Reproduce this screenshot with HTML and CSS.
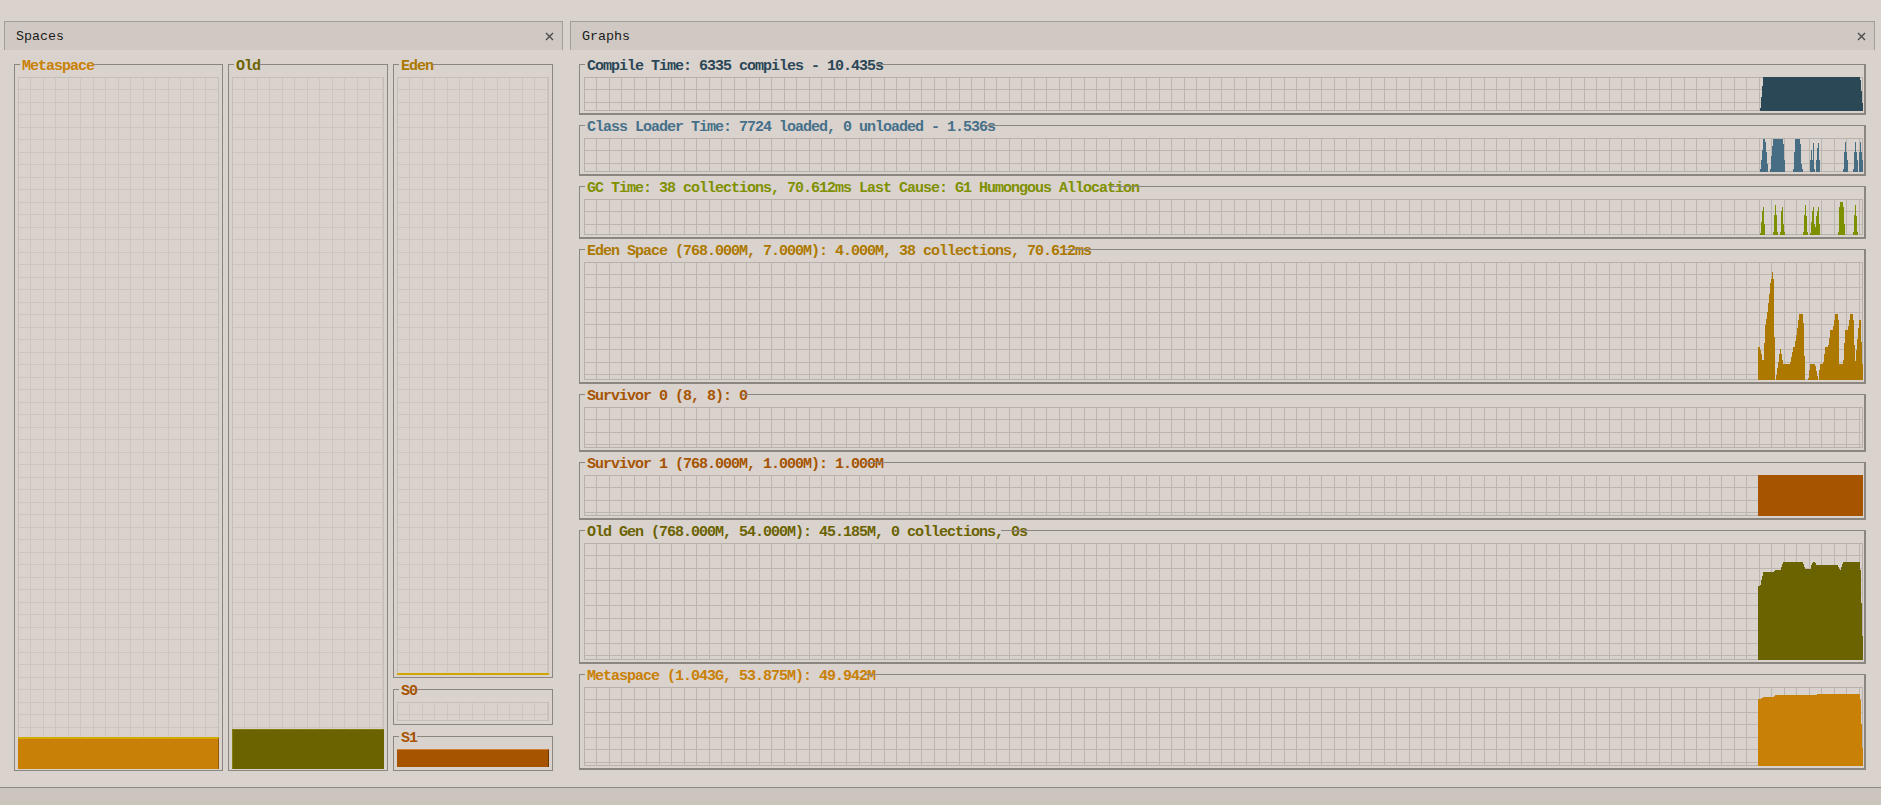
FILE: index.html
```html
<!DOCTYPE html>
<html>
<head>
<meta charset="utf-8">
<title>Visual GC</title>
<link rel="stylesheet" href="styles.css">
</head>
<body>
<div class="app">
  <div class="main">
    <section class="panel spaces">
      <div class="tab"><span class="tab-title">Spaces</span><svg class="close" viewBox="0 0 9 9"><path d="M1 1L8 8M8 1L1 8"/></svg></div>
      <div class="spaces-body">
        <div class="col col-meta">
          <div class="box grow">
            <div class="ttl"><span class="tt c-meta">Metaspace</span></div>
            <div class="frame"><div class="grid sgrid"><div class="fill f-meta"></div></div></div>
          </div>
        </div>
        <div class="col col-old">
          <div class="box grow">
            <div class="ttl"><span class="tt c-old">Old</span></div>
            <div class="frame"><div class="grid sgrid"><div class="fill f-old"></div></div></div>
          </div>
        </div>
        <div class="col col-right">
          <div class="box grow">
            <div class="ttl"><span class="tt c-eden">Eden</span></div>
            <div class="frame f-eden-frame"><div class="grid sgrid"><div class="fill f-eden"></div></div></div>
          </div>
          <div class="box">
            <div class="ttl"><span class="tt c-surv">S0</span></div>
            <div class="frame f-surv-frame"><div class="grid sgrid h-s0"></div></div>
          </div>
          <div class="box">
            <div class="ttl"><span class="tt c-surv">S1</span></div>
            <div class="frame f-surv-frame"><div class="grid sgrid h-s1"><div class="fill f-s1"></div></div></div>
          </div>
        </div>
      </div>
    </section>

    <section class="panel graphs">
      <div class="tab"><span class="tab-title">Graphs</span><svg class="close" viewBox="0 0 9 9"><path d="M1 1L8 8M8 1L1 8"/></svg></div>
      <div class="graphs-body">
        <div class="box gbox">
          <div class="ttl ov-compile"><span class="tt c-compile">Compile Time: 6335 compiles - 10.435s</span></div>
          <div class="frame"><div class="grid ggrid h-compile">
            <svg class="plot" width="105" height="34" viewBox="174 81 315 102" preserveAspectRatio="none" shape-rendering="crispEdges"><path class="p-compile" d="M180,183V174H183V141H186V108H189V81H480V90H483V122H486V158H489V183Z"/></svg>
          </div></div>
        </div>
        <div class="box gbox">
          <div class="ttl ov-cl"><span class="tt c-cl">Class Loader Time: 7724 loaded, 0 unloaded - 1.536s</span></div>
          <div class="frame"><div class="grid ggrid h-cl">
            <svg class="plot" width="105" height="34" viewBox="174 263 315 102" preserveAspectRatio="none" shape-rendering="crispEdges"><path class="p-cl" d="M180,365V357H183V330H186V300H189V267H195V276H198V306H201V342H204V365Z M210,365V357H213V318H216V288H219V267H249V282H252V330H255V365Z M279,365V357H282V306H285V267H300V282H303V342H306V357H309V365Z M330,365V330H333V300H336V330H339V279H342V357H345V365Z M348,365V330H351V294H354V279H357V330H360V365Z M429,365V357H432V306H435V276H438V306H441V330H444V365Z M459,365V357H462V306H465V276H468V306H471V330H474V365Z M477,365V306H480V276H483V306H486V330H489V365Z"/></svg>
          </div></div>
        </div>
        <div class="box gbox">
          <div class="ttl ov-gc"><span class="tt c-gc">GC Time: 38 collections, 70.612ms Last Cause: G1 Humongous Allocation</span></div>
          <div class="frame"><div class="grid ggrid h-gc">
            <svg class="plot" width="105" height="36" viewBox="174 442 315 108" preserveAspectRatio="none" shape-rendering="crispEdges"><path class="p-gc" d="M180,550V543H183V510H186V477H189V465H192V516H195V550Z M219,550V540H222V489H225V459H228V489H231V540H234V550Z M240,550V540H243V477H246V465H249V516H252V540H255V550Z M309,550V540H312V489H315V459H318V492H321V540H324V550Z M330,550V543H333V510H336V477H339V465H342V516H345V525H348V492H351V477H354V465H357V516H360V550Z M414,550V540H417V465H420V450H429V465H432V516H435V550Z M459,550V540H462V489H465V459H468V492H471V540H474V550Z"/></svg>
          </div></div>
        </div>
        <div class="box gbox">
          <div class="ttl ov-eden"><span class="tt c-eden">Eden Space (768.000M, 7.000M): 4.000M, 38 collections, 70.612ms</span></div>
          <div class="frame"><div class="grid ggrid h-eden">
            <svg class="plot" width="105" height="118" viewBox="174 65 315 354" preserveAspectRatio="none" shape-rendering="crispEdges"><path class="p-eden" d="M174,419V321H180V328H183V342H186V360H192V309H195V253H198V235H201V216H204V189H207V162H210V129H213V117H216V96H218V117H221V291H225V419Z M228,419V403H231V384H234V366H237V342H240V327H242V342H245V360H249V372H270V366H273V351H276V336H279V321H285V303H288V285H291V264H294V240H297V222H309V249H312V348H315V419Z M324,419V413H327V390H330V372H345V378H348V393H351V408H354V419Z M357,419V390H360V372H369V366H372V342H375V321H384V315H387V294H390V270H399V258H402V240H405V222H414V240H417V372H429V360H432V309H435V270H444V258H447V240H450V222H459V240H462V315H465V363H468V330H471V297H474V264H477V240H483V306H486V372H489V419Z"/></svg>
          </div></div>
        </div>
        <div class="box gbox">
          <div class="ttl ov-s0"><span class="tt c-surv">Survivor 0 (8, 8): 0</span></div>
          <div class="frame"><div class="grid ggrid h-surv"></div></div>
        </div>
        <div class="box gbox">
          <div class="ttl ov-s1"><span class="tt c-surv">Survivor 1 (768.000M, 1.000M): 1.000M</span></div>
          <div class="frame"><div class="grid ggrid h-surv"><div class="s1-block"></div></div></div>
        </div>
        <div class="box gbox">
          <div class="ttl ov-old"><span class="tt c-old">Old Gen (768.000M, 54.000M): 45.185M, 0 collections, 0s</span></div>
          <div class="frame"><div class="grid ggrid h-old">
            <svg class="plot" width="105" height="117" viewBox="174 68 315 351" preserveAspectRatio="none" shape-rendering="crispEdges"><path class="p-old" d="M174,419V198H180V195H183V180H186V168H189V156H222V153H225V150H243V141H246V132H249V126H309V132H312V141H315V147H333V135H336V129H339V126H345V129H348V135H414V141H417V147H420V150H423V141H426V132H429V126H480V150H483V249H486V348H489V419Z"/></svg>
          </div></div>
        </div>
        <div class="box gbox">
          <div class="ttl ov-meta"><span class="tt c-meta">Metaspace (1.043G, 53.875M): 49.942M</span></div>
          <div class="frame"><div class="grid ggrid h-meta">
            <svg class="plot" width="105" height="79" viewBox="174 500 315 237" preserveAspectRatio="none" shape-rendering="crispEdges"><path class="p-meta" d="M174,737V537H183V534H189V531H222V528H225V525H351V522H480V540H483V612H486V684H489V737Z"/></svg>
          </div></div>
        </div>
      </div>
    </section>
  </div>
  <div class="statusbar"></div>
</div>
</body>
</html>
```

FILE: styles.css
```css
* { box-sizing: border-box; margin: 0; padding: 0; }
html, body { width: 1881px; height: 805px; overflow: hidden; }
body {
  background: #dad3cd;
  font-family: "Liberation Mono", "DejaVu Sans Mono", monospace;
  color: #1c1c1c;
}
.app { display: flex; flex-direction: column; height: 805px; }
.main { flex: 1; display: flex; gap: 7px; padding: 21px 6px 0 4px; min-height: 0; }
.panel { display: flex; flex-direction: column; }
.spaces { width: 559px; flex: none; }
.graphs { flex: 1; }

.tab {
  height: 29px; flex: none;
  display: flex; align-items: center; justify-content: space-between;
  background: #d0c9c3;
  border: 1px solid #a49e99; border-bottom: none;
  padding: 0 8px 0 11px;
  font-size: 13.33px;
  color: #1a1a1a;
}
.close { width: 9px; height: 9px; }
.close path { stroke: #4a4a4a; stroke-width: 1.4; fill: none; }

.statusbar { height: 18px; flex: none; border-top: 1px solid #8e8883; background: #ccc5be; }

/* spaces */
.spaces-body { flex: 1; display: flex; gap: 5px; padding: 8px 10px 16px 10px; min-height: 0; }
.col { display: flex; flex-direction: column; gap: 5px; }
.col-meta { width: 209px; }
.col-old { width: 160px; }
.col-right { width: 160px; }

/* titled box */
.box { display: flex; flex-direction: column; flex: none; }
.box.grow { flex: 1; }
.ttl {
  display: flex; height: 14px; flex: none;
  font-size: 15px; font-weight: bold; letter-spacing: -1px; line-height: 14px;
  white-space: nowrap;
}
.ttl::before {
  content: ""; flex: none; width: 5px; height: 7px; align-self: flex-end;
  border-top: 1px solid #8c8681; border-left: 1px solid #8c8681;
  margin-right: 2px;
}
.ttl::after {
  content: ""; flex: 1; height: 7px; align-self: flex-end;
  border-top: 1px solid #8c8681; border-right: 1px solid #8c8681;
}
.tt { display: block; margin-top: 2px; }
.frame {
  flex: 1; display: flex; flex-direction: column;
  border: 1px solid #8c8681; border-top: none;
  padding: 5px 3px 1px 3px;
}
.f-eden-frame { padding-bottom: 2px; }
.f-surv-frame { padding-bottom: 3px; }

/* grids */
.grid {
  display: flex; justify-content: flex-end; align-items: flex-end;
  overflow: hidden; flex: none;
  background-image:
    linear-gradient(to right, var(--gl) 0 1px, transparent 1px 12px, var(--gl) 12px 13px, transparent 13px),
    linear-gradient(to bottom, var(--gl) 0 1px, transparent 1px 12px, var(--gl) 12px 13px, transparent 13px);
  background-size: 25px 25px;
  box-shadow: inset 0 0 0 1px var(--gf);
}
.sgrid { --gl: #cdc6c0; --gf: #c6beb8; flex: 1; }
.ggrid { --gl: #bdb5b0; --gf: #b8b0aa; }
.h-s0 { flex: none; height: 19px; }
.h-s1 { flex: none; height: 18px; }

.fill { width: 100%; flex: none; }
.f-meta { height: 32px; background: #c98006; border-top: 2px solid #d5aa00; border-right: 1px solid #8f5b00; }
.f-old { height: 40px; background: #6b6200; border-top: 1px solid #857d10; border-left: 1px solid #857d10; }
.f-eden { height: 2px; background: #d3a500; }
.f-s1 { height: 18px; background: #a65400; border-top: 1px solid #d0803a; border-right: 1px solid #6a3600; }

/* graphs */
.graphs-body { flex: 1; display: flex; flex-direction: column; gap: 4px; padding: 8px 9px 0 9px; min-height: 0; }
.gbox .ttl::after { border-right-width: 2px; }
.gbox .frame { border-right-width: 2px; border-bottom-width: 2px; padding: 5px 1px 2px 4px; }
.h-compile, .h-cl { height: 34px; }
.h-gc { height: 36px; }
.h-eden { height: 118px; }
.h-surv { height: 41px; }
.h-old { height: 117px; }
.h-meta { height: 79px; }
.plot { display: block; flex: none; }
.s1-block { width: 105px; height: 100%; background: #a65400; flex: none; }

/* title overlaps (border line drawn over the end of the title) */
.ov-compile::after { margin-left: -7px; }
.ov-cl::after { margin-left: -10px; }
.ov-gc::after { margin-left: -30px; }
.ov-eden::after { margin-left: -26px; }
.ov-s0::after { margin-left: -5px; }
.ov-s1::after { margin-left: -18px; }
.ov-old::after { margin-left: -26px; }
.ov-meta::after { margin-left: -10px; }

/* colours */
.c-compile { color: #2b4757; }
.c-cl { color: #46708a; }
.c-gc { color: #7f9000; }
.c-eden { color: #ad7800; }
.c-surv { color: #a65400; }
.c-old { color: #6b6200; }
.c-meta { color: #c98006; }
.p-compile { fill: #2a4856; }
.p-cl { fill: #466d84; }
.p-gc { fill: #7d9100; }
.p-eden { fill: #ad7800; }
.p-old { fill: #6b6200; }
.p-meta { fill: #c98006; }
```
